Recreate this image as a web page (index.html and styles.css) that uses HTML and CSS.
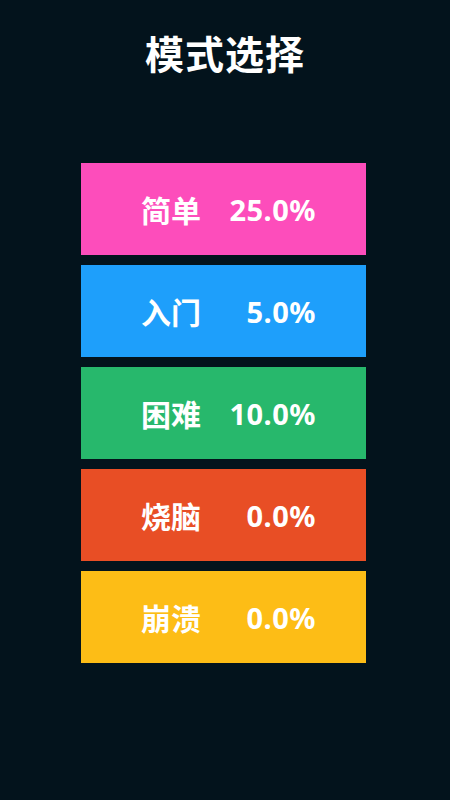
FILE: index.html
```html
<!DOCTYPE html>
<html lang="zh">
<head>
<meta charset="utf-8">
<link rel="stylesheet" href="styles.css">
</head>
<body>
<div class="page">
  <h1 class="title">模式选择</h1>
  <div class="list">
    <div class="card pink"><span class="label">简单</span><span class="pct">25.0%</span></div>
    <div class="card blue"><span class="label">入门</span><span class="pct">5.0%</span></div>
    <div class="card green"><span class="label">困难</span><span class="pct">10.0%</span></div>
    <div class="card red"><span class="label">烧脑</span><span class="pct">0.0%</span></div>
    <div class="card yellow"><span class="label">崩溃</span><span class="pct">0.0%</span></div>
  </div>
</div>
</body>
</html>
```
FILE: styles.css
```css
html, body {
  margin: 0;
  padding: 0;
  background: #03131c;
}
.page {
  width: 450px;
  height: 800px;
  display: flex;
  flex-direction: column;
  font-family: "Noto Sans CJK SC", "Noto Sans", sans-serif;
  color: #ffffff;
}
.title {
  margin: 27px 0 0 0;
  height: 50px;
  line-height: 50px;
  text-align: center;
  font-size: 39px;
  font-weight: 700;
  letter-spacing: 1px;
}
.list {
  margin: 86px 0 0 81px;
  display: flex;
  flex-direction: column;
  gap: 10px;
  width: 285px;
}
.card {
  height: 92px;
  display: flex;
  align-items: center;
  justify-content: space-between;
  padding: 0 50px 0 60px;
  box-sizing: border-box;
}
.label {
  font-size: 30px;
  font-weight: 700;
  line-height: 1;
}
.pct {
  font-family: "Noto Sans", "Open Sans", sans-serif;
  font-size: 29px;
  font-weight: 700;
  line-height: 1;
  letter-spacing: 0.5px;
}
.pink { background: #fd4dbb; }
.blue { background: #1e9ffb; }
.green { background: #27b86c; }
.red { background: #e84e25; }
.yellow { background: #fdbd16; }
```
